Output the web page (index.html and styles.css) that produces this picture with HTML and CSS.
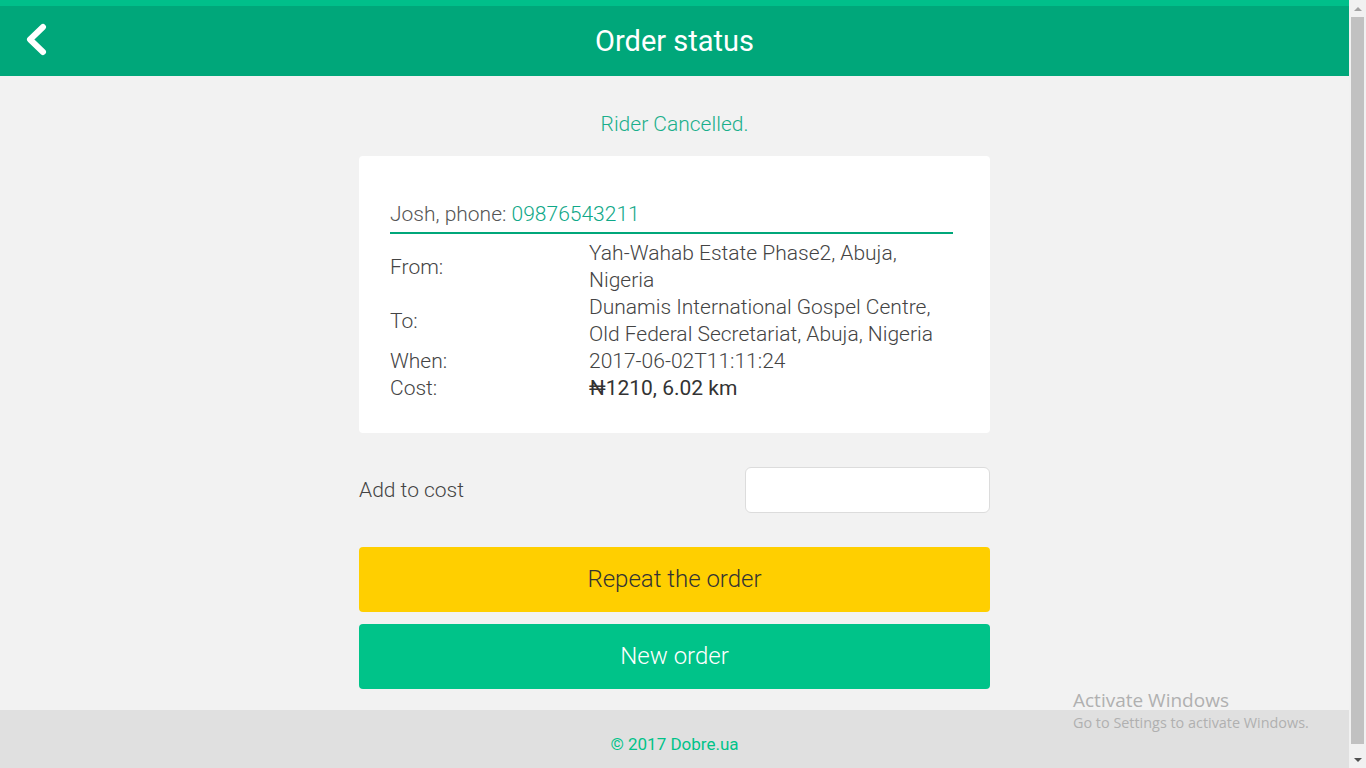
FILE: index.html
```html
<!DOCTYPE html>
<html lang="en">
<head>
<meta charset="utf-8">
<title>Order status</title>
<link rel="stylesheet" href="styles.css">
</head>
<body>
<div class="page">
  <header class="topbar">
    <a class="back" href="#" aria-label="Back">
      <svg width="24" height="34" viewBox="0 0 24 34"><path d="M18 4 L5 16.5 L18 29" fill="none" stroke="#fff" stroke-width="6" stroke-linecap="round" stroke-linejoin="round"/></svg>
    </a>
    <h1 class="title">Order status</h1>
    <span></span>
  </header>

  <main class="main">
    <div class="container">
      <p class="status">Rider Cancelled.</p>

      <section class="card">
        <div class="contact">Josh, phone: <span class="phone">09876543211</span></div>
        <div class="details">
          <div class="label">From:</div>
          <div class="value">Yah-Wahab Estate Phase2, Abuja, Nigeria</div>
          <div class="label">To:</div>
          <div class="value">Dunamis International Gospel Centre, Old Federal Secretariat, Abuja, Nigeria</div>
          <div class="label">When:</div>
          <div class="value">2017-06-02T11:11:24</div>
          <div class="label">Cost:</div>
          <div class="value cost">₦1210, 6.02 km</div>
        </div>
      </section>

      <div class="addcost">
        <label class="addcost-label" for="add">Add to cost</label>
        <input class="addcost-input" id="add" type="text">
      </div>

      <button class="btn btn-repeat">Repeat the order</button>
      <button class="btn btn-new">New order</button>
    </div>
  </main>

  <footer class="footer">© 2017 Dobre.ua</footer>

  <div class="watermark">
    <div class="wm-title">Activate Windows</div>
    <div class="wm-sub">Go to Settings to activate Windows.</div>
  </div>
</div>

<div class="scrollbar">
  <div class="sb-arrow sb-up"></div>
  <div class="sb-track"><div class="sb-thumb"></div></div>
  <div class="sb-arrow sb-down"></div>
</div>
</body>
</html>
```

FILE: styles.css
```css
* { box-sizing: border-box; }

html, body {
  margin: 0;
  height: 100%;
}

body {
  display: flex;
  height: 768px;
  overflow: hidden;
  font-family: Roboto, "Liberation Sans", sans-serif;
  background: #f2f2f2;
}

.page {
  position: relative;
  flex: 1;
  display: flex;
  flex-direction: column;
  background: #f2f2f2;
  overflow: hidden;
}

.topbar {
  flex-shrink: 0;
  height: 76px;
  border-top: 6px solid #00bf8a;
  background: #00a77a;
  display: grid;
  grid-template-columns: 1fr auto 1fr;
  align-items: center;
}

.back {
  display: flex;
  align-items: center;
  padding-left: 25px;
  height: 100%;
  padding-bottom: 2px;
}

.title {
  margin: 0;
  color: #fff;
  font-size: 29px;
  font-weight: 400;
  line-height: 34px;
  padding-bottom: 0;
}

.main {
  flex-shrink: 0;
  display: flex;
  justify-content: center;
  padding-bottom: 21px;
}

.container {
  width: 631px;
  display: flex;
  flex-direction: column;
}

.status {
  margin: 36px 0 20px;
  text-align: center;
  color: #1aaf8b;
  font-size: 21px;
  font-weight: 300;
  line-height: 24px;
}

.card {
  background: #fff;
  border-radius: 4px;
  padding: 45px 37px 31px 31px;
  color: #444;
  font-size: 21px;
  font-weight: 300;
  line-height: 27px;
}

.contact {
  color: #555;
  padding-bottom: 4px;
  border-bottom: 2px solid #00a77a;
  margin-bottom: 6px;
}

.phone {
  color: #0fa888;
}

.details {
  display: grid;
  grid-template-columns: 199px 1fr;
  align-items: center;
}

.label {
  color: #444;
}

.value {
  color: #444;
}

.value.cost {
  color: #333;
  font-weight: 400;
}

.addcost {
  margin-top: 34px;
  display: flex;
  justify-content: space-between;
  align-items: center;
}

.addcost-label {
  color: #444;
  font-size: 21px;
  font-weight: 300;
}

.addcost-input {
  width: 245px;
  height: 46px;
  border: 1px solid #dcdcdc;
  border-radius: 6px;
  background: #fff;
  outline: none;
  font: inherit;
}

.btn {
  height: 65px;
  border: 0;
  border-radius: 4px;
  font-family: Roboto, "Liberation Sans", sans-serif;
  font-size: 24px;
  font-weight: 300;
  cursor: pointer;
  padding: 0 0 2px;
}

.btn-repeat {
  margin-top: 34px;
  background: #ffcf00;
  color: #333;
}

.btn-new {
  margin-top: 12px;
  background: #00c389;
  color: #fff;
}

.footer {
  flex: 1 0 70px;
  background: #e0e0e0;
  color: #00c389;
  text-align: center;
  font-size: 17px;
  font-weight: 400;
  line-height: 20px;
  padding-top: 24px;
}

.watermark {
  position: absolute;
  left: 1073px;
  top: 687px;
  font-family: "Open Sans", "DejaVu Sans", sans-serif;
  color: #b0b0b0;
}

.wm-title {
  font-size: 19px;
  line-height: 26px;
}

.wm-sub {
  font-size: 14.4px;
  line-height: 20px;
}

.scrollbar {
  width: 17px;
  flex-shrink: 0;
  background: #f1f1f1;
  display: flex;
  flex-direction: column;
}

.sb-arrow {
  height: 17px;
  display: flex;
  align-items: center;
  justify-content: center;
}

.sb-up::before,
.sb-down::before {
  content: "";
  width: 0;
  height: 0;
  border-left: 4px solid transparent;
  border-right: 4px solid transparent;
}

.sb-up::before {
  border-bottom: 4px solid #a3a3a3;
}

.sb-down::before {
  border-top: 4px solid #505050;
}

.sb-track {
  flex: 1;
  padding: 0 2px 7px;
}

.sb-thumb {
  height: 100%;
  background: #c1c1c1;
}
```
